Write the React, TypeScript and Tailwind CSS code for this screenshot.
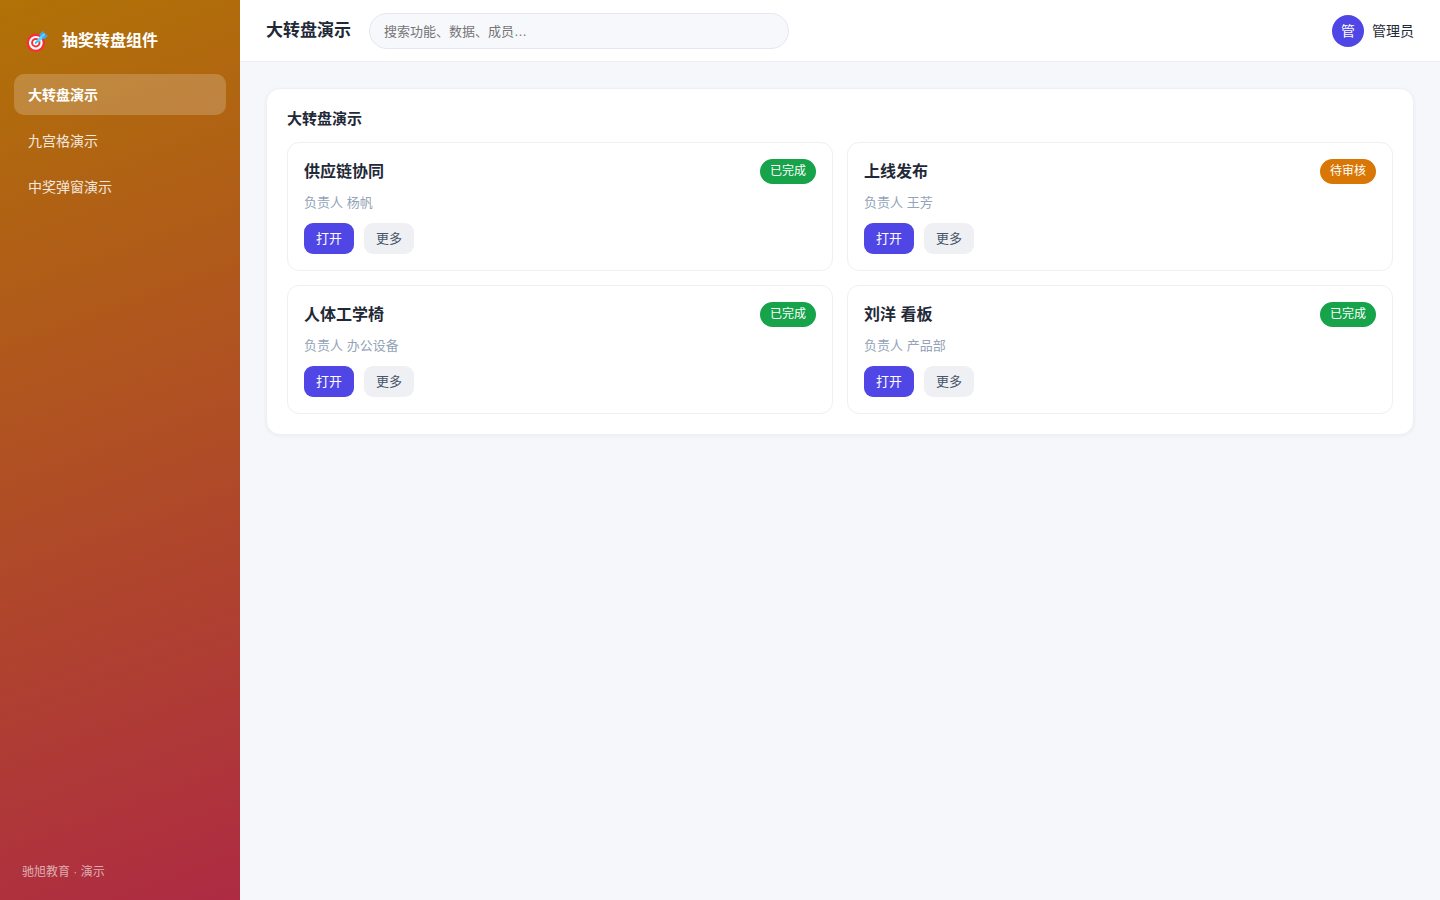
import React, { useState } from 'react';
import clsx from 'clsx';

interface Task {
  title: string;
  owner: string;
  status: 'done' | 'pending';
}

const NAV_ITEMS = ['大转盘演示', '九宫格演示', '中奖弹窗演示'];

const TASKS: Task[] = [
  { title: '供应链协同', owner: '杨帆', status: 'done' },
  { title: '上线发布', owner: '王芳', status: 'pending' },
  { title: '人体工学椅', owner: '办公设备', status: 'done' },
  { title: '刘洋 看板', owner: '产品部', status: 'done' },
];

const TargetIcon: React.FC = () => (
  <svg viewBox="0 0 22 22" className="w-[22px] h-[22px] shrink-0" aria-hidden="true">
    <circle cx="9.8" cy="12.8" r="9.2" fill="#f92f36" />
    <circle cx="9.8" cy="12.8" r="6.9" fill="#fff" />
    <circle cx="9.8" cy="12.8" r="4.7" fill="#f92f36" />
    <circle cx="9.8" cy="12.8" r="2.7" fill="#fff" />
    <path d="M9.6 13 L14.5 8" stroke="#26c9fc" strokeWidth="1.8" strokeLinecap="round" />
    <path d="M11 10.2 L14.4 6 L17.2 8.2 L13 12 Z" fill="#50e2ff" />
    <path d="M13.6 7.2 L13.8 4 L17.2 0.8 L18.2 4.2 Z" fill="#46a4fb" />
    <path d="M15.4 8.8 L18.8 8.8 L22 5.6 L18.4 4.6 Z" fill="#46a4fb" />
    <path d="M14 8.4 L18.4 4.2" stroke="#50e2ff" strokeWidth="1.8" strokeLinecap="round" />
  </svg>
);

const Sidebar: React.FC<{ active: string; onSelect: (name: string) => void }> = ({ active, onSelect }) => (
  <aside className="w-60 shrink-0 flex flex-col px-[14px] pt-[21px] pb-[18px] text-white bg-[linear-gradient(160deg,#b17206,#ae2b43)]">
    <div className="flex items-center gap-[14px] h-10 pl-3 mb-[13px]">
      <TargetIcon />
      <span className="text-base font-bold">抽奖转盘组件</span>
    </div>
    <nav className="flex flex-col gap-[5px]">
      {NAV_ITEMS.map((name) => (
        <button
          key={name}
          type="button"
          onClick={() => onSelect(name)}
          className={clsx(
            'rounded-[10px] px-[14px] pt-[11px] pb-[10px] text-left text-sm leading-5 cursor-pointer',
            name === active ? 'bg-white/20 font-bold text-white' : 'text-white/85'
          )}
        >
          {name}
        </button>
      ))}
    </nav>
    <div className="mt-auto pl-2 text-xs leading-5 text-white/60">驰旭教育 · 演示</div>
  </aside>
);

const TaskCard: React.FC<{ task: Task }> = ({ task }) => (
  <article className="rounded-xl border border-[#eef0f4] p-4">
    <div className="flex items-start justify-between">
      <h3 className="text-base leading-[26px] font-bold">{task.title}</h3>
      <span
        className={clsx(
          'rounded-full px-[10px] text-xs leading-[25px] text-white',
          task.status === 'done' ? 'bg-[#16a34a]' : 'bg-[#d97706]'
        )}
      >
        {task.status === 'done' ? '已完成' : '待审核'}
      </span>
    </div>
    <p className="mt-2 text-[13px] leading-5 text-[#94a3b8]">负责人 {task.owner}</p>
    <div className="mt-[10px] flex gap-[10px]">
      <button type="button" className="rounded-[9px] bg-[#4f46e5] px-3 text-[13px] leading-[31px] text-white cursor-pointer">
        打开
      </button>
      <button type="button" className="rounded-[9px] bg-[#eef0f4] px-3 text-[13px] leading-[31px] text-[#475569] cursor-pointer">
        更多
      </button>
    </div>
  </article>
);

export default function App() {
  const [active, setActive] = useState(NAV_ITEMS[0]);

  return (
    <div className="flex min-h-screen bg-[#f5f7fb] text-[#1f2937] font-['Liberation_Sans','Noto_Sans_CJK_SC',sans-serif]">
      <Sidebar active={active} onSelect={setActive} />
      <div className="flex-1 min-w-0 flex flex-col">
        <header className="flex items-center gap-[18px] border-b border-[#eceef3] bg-white px-[26px] pt-[13px] pb-3">
          <h1 className="text-[17px] leading-[26px] font-bold whitespace-nowrap">{active}</h1>
          <input
            type="search"
            aria-label="搜索"
            placeholder="搜索功能、数据、成员…"
            className="h-9 w-full max-w-[420px] rounded-full border border-[#e5e7ef] bg-[#f7f8fc] px-[14px] text-[13px] outline-none placeholder:text-[#757575]"
          />
          <div className="ml-auto flex items-center gap-2 text-sm whitespace-nowrap">
            <span className="flex size-8 items-center justify-center rounded-full bg-[#4f46e5] text-white">管</span>
            <span>管理员</span>
          </div>
        </header>
        <main className="p-[26px]">
          <section className="rounded-[14px] border border-[#eef0f4] bg-white p-5 shadow-[0_1px_4px_rgba(20,30,60,0.05)]">
            <h2 className="mb-[13px] text-[15px] leading-5 font-bold">{active}</h2>
            <div className="grid grid-cols-2 gap-[14px]">
              {TASKS.map((task) => (
                <TaskCard key={task.title} task={task} />
              ))}
            </div>
          </section>
        </main>
      </div>
    </div>
  );
}
